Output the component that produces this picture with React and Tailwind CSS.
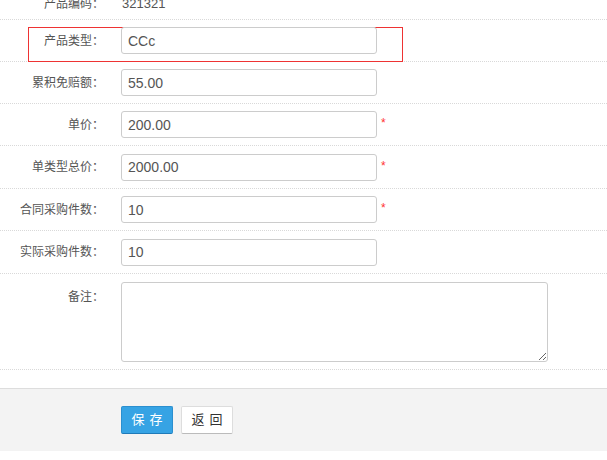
import { useState } from 'react';

const cjk = '[font-family:"Liberation_Sans","Noto_Sans_CJK_SC",sans-serif]';

function Label({ children, className = '' }) {
  return (
    <div className={`w-[75px] shrink-0 flex justify-end ${className}`}>
      <span className="whitespace-nowrap text-[12px] text-[#555]">{children}</span>
    </div>
  );
}

function Row({ label, children, required, boxed, h = 'h-[42px]' }) {
  return (
    <div className={`${h} border-b border-dotted border-[#d9d9d9] flex items-center`}>
      <div className={`flex items-center h-[35px] ml-[28px] w-[375px] border ${boxed ? 'border-[#e33] mt-[7px] pb-[7px]' : 'border-transparent'}`}>
        <Label>{label}</Label>
        <div className="ml-[17px]">{children}</div>
        {required && <span className="ml-[4px] -mt-[3px] text-[12px] text-[#f33]">*</span>}
      </div>
    </div>
  );
}

function Field({ value }) {
  const [v, setV] = useState(value);
  return (
    <input
      value={v}
      onChange={(e) => setV(e.target.value)}
      className="w-[256px] h-[27px] border border-[#ccc] rounded-[3px] px-[6px] text-[14px] text-[#555] outline-none bg-white"
    />
  );
}

export default function App() {
  const [note, setNote] = useState('');

  return (
    <div className={`w-[607px] h-[460px] bg-white overflow-hidden ${cjk}`}>
      {/* top row, cut off */}
      <div className="h-[20px] border-b border-dotted border-[#d9d9d9] flex items-start">
        <div className="flex -mt-[3px] leading-[14px] ml-[29px]">
          <Label>产品编码：</Label>
          <span className="ml-[18px] text-[13px] text-[#555]">321321</span>
        </div>
      </div>

      <Row label="产品类型：" boxed><Field value="CCc" /></Row>
      <Row label="累积免赔额："><Field value="55.00" /></Row>
      <Row label="单价：" required><Field value="200.00" /></Row>
      <Row label="单类型总价：" required h="h-[43px]"><Field value="2000.00" /></Row>
      <Row label="合同采购件数：" required><Field value="10" /></Row>
      <Row label="实际采购件数：" h="h-[43px]"><Field value="10" /></Row>

      {/* remark */}
      <div className="h-[96px] border-b border-dotted border-[#d9d9d9] flex items-start pt-[8px] pl-[29px]">
        <Label className="mt-[6px]">备注：</Label>
        <textarea
          value={note}
          onChange={(e) => setNote(e.target.value)}
          className="ml-[17px] w-[427px] h-[80px] border border-[#ccc] rounded-[3px] outline-none"
        />
      </div>

      {/* footer */}
      <div className="mt-[18px] h-[63px] bg-[#f3f3f3] border-t border-[#ddd] flex items-center pl-[121px] gap-[8px]">
        <button className="w-[52px] h-[28px] rounded-[2px] bg-[#36a3e4] border border-[#2b8fcf] border-b-[#1f7ab8] text-white text-[13px] tracking-[5px] pl-[5px]">
          保存
        </button>
        <button className="w-[52px] h-[28px] rounded-[2px] bg-white border border-[#ddd] border-b-[#bbb] text-[#333] text-[13px] tracking-[5px] pl-[5px]">
          返回
        </button>
      </div>
    </div>
  );
}
